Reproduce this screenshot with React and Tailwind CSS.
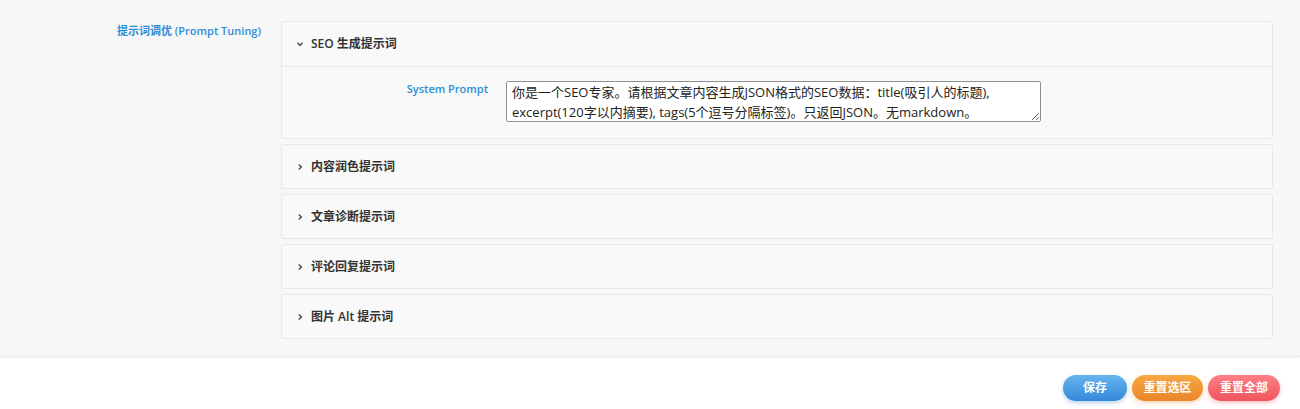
import { useState } from "react";

const prompts = [
  {
    title: "SEO 生成提示词",
    value:
      "你是一个SEO专家。请根据文章内容生成JSON格式的SEO数据：title(吸引人的标题), excerpt(120字以内摘要), tags(5个逗号分隔标签)。只返回JSON。无markdown。",
  },
  { title: "内容润色提示词", value: "" },
  { title: "文章诊断提示词", value: "" },
  { title: "评论回复提示词", value: "" },
  { title: "图片 Alt 提示词", value: "" },
];

const Chevron = ({ open }) => (
  <svg
    width="8"
    height="8"
    viewBox="0 0 8 8"
    className={open ? "" : "-rotate-90"}
    fill="none"
    stroke="#555"
    strokeWidth="1.6"
  >
    <path d="M1.5 2.8 L4 5.3 L6.5 2.8" />
  </svg>
);

const App = () => {
  const [openIdx, setOpenIdx] = useState(0);

  return (
    <div
      className="w-[1300px] h-[409px] bg-white flex flex-col"
      style={{ fontFamily: '"Open Sans", "Noto Sans CJK SC", sans-serif' }}
    >
      {/* Settings area */}
      <div className="flex bg-[#f7f7f7] pl-[117px] pt-[21px] pb-[17px] border-b border-[#ececec] shadow-[0_1px_3px_rgba(0,0,0,0.05)]">
        <div className="w-[164px] text-[11px] font-semibold text-[#2b8ed6] leading-[18px] pt-[1px]">
          提示词调优 (Prompt Tuning)
        </div>

        <div className="w-[992px] flex flex-col gap-[5px]">
          {prompts.map((p, i) => (
            <div
              key={p.title}
              className="bg-[#f9f9f9] border border-[#e8e8e8] rounded-[2px]"
            >
              <button
                onClick={() => setOpenIdx(openIdx === i ? -1 : i)}
                className={`w-full flex items-center gap-[7px] pl-[14px] text-left ${
                  openIdx === i ? "h-[44px]" : "h-[43px]"
                }`}
              >
                <Chevron open={openIdx === i} />
                <span className="text-[12px] font-semibold text-[#333]">
                  {p.title}
                </span>
              </button>

              {openIdx === i && (
                <div className="border-t border-[#e8e8e8] h-[72px] flex pt-[14px]">
                  <div className="w-[224px] text-right pr-[18px] text-[11px] font-semibold text-[#2b8ed6] leading-[16px]">
                    System Prompt
                  </div>
                  <textarea
                    defaultValue={p.value}
                    className="w-[535px] h-[41px] bg-white border border-[#8f8f8f] rounded-[2px] px-[5px] py-0 text-[13px] leading-[20px] text-[#222] resize-y outline-none"
                  />
                </div>
              )}
            </div>
          ))}
        </div>
      </div>

      {/* Action bar */}
      <div className="flex-1 flex justify-end items-start gap-[5px] pr-[20px] pt-[18px]">
        <button className="w-[64px] h-[26px] rounded-full bg-gradient-to-b from-[#66b5ee] to-[#3388d8] text-white text-[12px] font-bold shadow-[0_2px_4px_rgba(42,127,212,0.35)]">
          保存
        </button>
        <button className="w-[71px] h-[26px] rounded-full bg-gradient-to-b from-[#f7a843] to-[#ea852a] text-white text-[12px] font-bold shadow-[0_2px_4px_rgba(233,130,37,0.35)]">
          重置选区
        </button>
        <button className="w-[72px] h-[26px] rounded-full bg-gradient-to-b from-[#fc8085] to-[#ee535e] text-white text-[12px] font-bold shadow-[0_2px_4px_rgba(236,79,91,0.35)]">
          重置全部
        </button>
      </div>
    </div>
  );
};

export default App;
